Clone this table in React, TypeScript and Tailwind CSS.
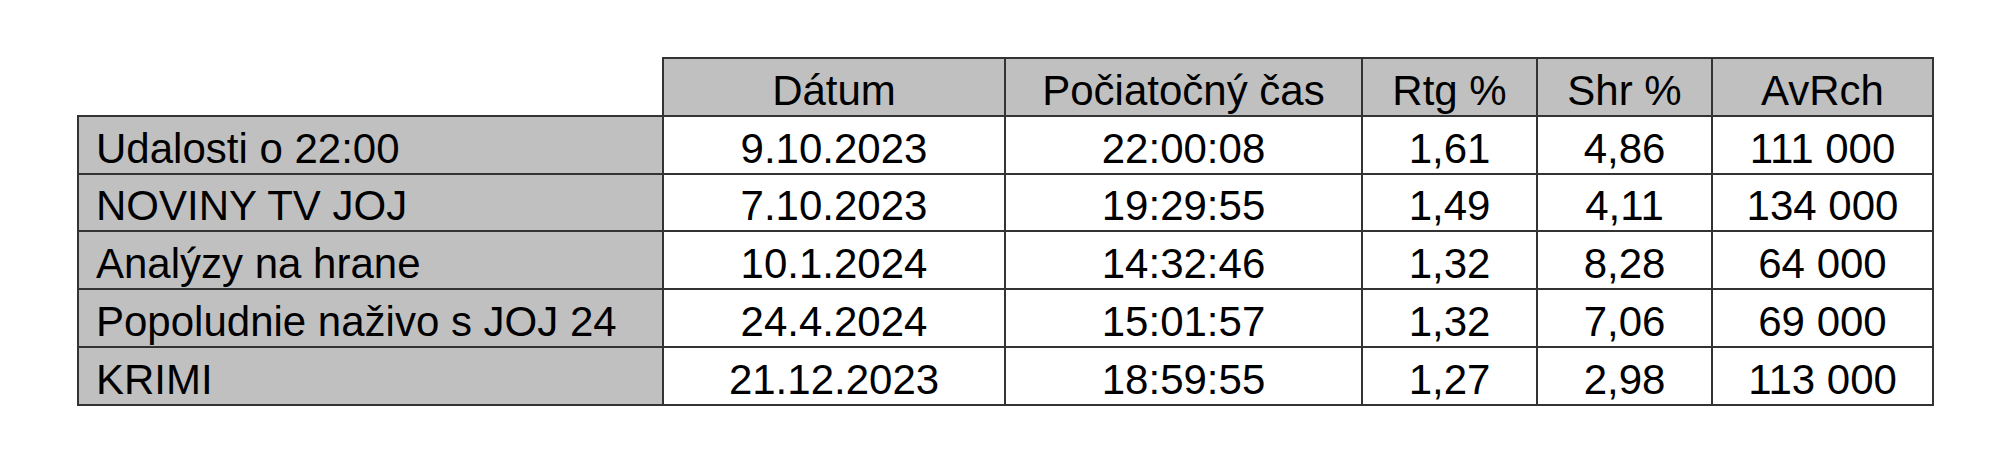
const columns = ['Dátum', 'Počiatočný čas', 'Rtg %', 'Shr %', 'AvRch'];

const rows = [
  ['Udalosti o 22:00', '9.10.2023', '22:00:08', '1,61', '4,86', '111 000'],
  ['NOVINY TV JOJ', '7.10.2023', '19:29:55', '1,49', '4,11', '134 000'],
  ['Analýzy na hrane', '10.1.2024', '14:32:46', '1,32', '8,28', '64 000'],
  ['Popoludnie naživo s JOJ 24', '24.4.2024', '15:01:57', '1,32', '7,06', '69 000'],
  ['KRIMI', '21.12.2023', '18:59:55', '1,27', '2,98', '113 000'],
];

const cell = 'h-[57.8px] border-2 border-[#333333] align-bottom pb-[3px] leading-[42px]';

export default function App() {
  return (
    <div className="min-h-[462px] w-[2000px] bg-white pt-[57px] pl-[77px] font-['Liberation_Sans',Arial,sans-serif] text-[42px] text-black">
      <table className="table-fixed border-collapse w-[1855px]">
        <colgroup>
          <col className="w-[585px]" />
          <col className="w-[342px]" />
          <col className="w-[357px]" />
          <col className="w-[175px]" />
          <col className="w-[175px]" />
          <col className="w-[221px]" />
        </colgroup>
        <thead>
          <tr>
            <th className="h-[57.8px] border-none bg-white" />
            {columns.map(c => (
              <th key={c} className={`${cell} bg-[#c0c0c0] text-center font-normal`}>
                {c}
              </th>
            ))}
          </tr>
        </thead>
        <tbody>
          {rows.map(r => (
            <tr key={r[0]}>
              <td className={`${cell} bg-[#c0c0c0] pl-[17px] text-left whitespace-nowrap`}>{r[0]}</td>
              {r.slice(1).map((v, i) => (
                <td key={i} className={`${cell} bg-white text-center`}>
                  {v}
                </td>
              ))}
            </tr>
          ))}
        </tbody>
      </table>
    </div>
  );
}
